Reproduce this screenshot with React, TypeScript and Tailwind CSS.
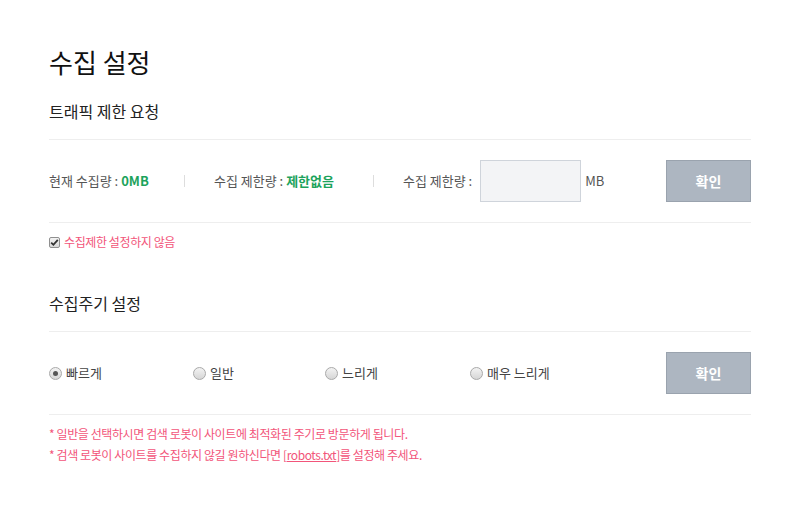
import React from 'react'

const font = { fontFamily: '"Noto Sans CJK KR", "Noto Sans", sans-serif' }

function Radio({ checked, label }: { checked?: boolean; label: string }) {
  return (
    <label className="flex items-center gap-[4px] text-[13px] text-[#444]">
      <span className="w-[13px] h-[13px] rounded-full border border-[#a9a9a9] bg-gradient-to-b from-[#f3f3f3] to-[#d6d6d6] flex items-center justify-center">
        {checked && <span className="w-[5px] h-[5px] rounded-full bg-[#555]" />}
      </span>
      {label}
    </label>
  )
}

function ConfirmButton() {
  return (
    <button className="w-[85px] h-[42px] bg-[#adb6c1] border border-[#9aa3ae] text-white text-[14px] font-bold">
      확인
    </button>
  )
}

export default function App() {
  return (
    <div className="min-h-screen bg-white" style={font}>
      <div className="w-[702px] ml-[49px] pt-[46px]">
        {/* Title */}
        <h1 className="text-[26px] leading-[32px] text-[#111]">수집 설정</h1>

        {/* Traffic limit */}
        <h2 className="mt-[23px] text-[16px] leading-[20px] text-[#222] pb-[18px] border-b border-[#eeeeee]">
          트래픽 제한 요청
        </h2>
        <div className="flex items-center py-[20px] border-b border-[#eeeeee] text-[13px] text-[#555]">
          <span className="w-[135px]">
            현재 수집량 : <b className="text-[#1ca35c]">0MB</b>
          </span>
          <span className="w-px h-[12px] bg-[#dddddd]" />
          <span className="ml-[29px] w-[159px]">
            수집 제한량 : <b className="text-[#1ca35c]">제한없음</b>
          </span>
          <span className="w-px h-[12px] bg-[#dddddd]" />
          <span className="ml-[29px]">수집 제한량 :</span>
          <input className="ml-[8px] w-[101px] h-[42px] bg-[#f3f4f6] border border-[#cfd4db] outline-none" />
          <span className="ml-[4px]">MB</span>
          <span className="ml-auto">
            <ConfirmButton />
          </span>
        </div>
        <label className="flex items-center gap-[4px] mt-[9px] h-[20px] text-[12px] tracking-[-0.4px] text-[#f2557a]">
          <span className="w-[11px] h-[11px] border border-[#8f8f8f] bg-gradient-to-b from-[#f4f4f4] to-[#d8d8d8] rounded-[2px] flex items-center justify-center">
            <svg width="9" height="9" viewBox="0 0 9 9">
              <path d="M1.2 4.6 L3.4 6.8 L7.8 1.8" fill="none" stroke="#333" strokeWidth="1.8" />
            </svg>
          </span>
          수집제한 설정하지 않음
        </label>

        {/* Crawl period */}
        <h2 className="mt-[41px] text-[16px] leading-[20px] text-[#222] pb-[18px] border-b border-[#eeeeee]">
          수집주기 설정
        </h2>
        <div className="flex items-center py-[20px] border-b border-[#eeeeee]">
          <span className="w-[144px]">
            <Radio checked label="빠르게" />
          </span>
          <span className="w-[132px]">
            <Radio label="일반" />
          </span>
          <span className="w-[145px]">
            <Radio label="느리게" />
          </span>
          <Radio label="매우 느리게" />
          <span className="ml-auto">
            <ConfirmButton />
          </span>
        </div>
        <ul className="pt-[8px] text-[12px] leading-[21px] tracking-[-0.4px] text-[#f2557a]">
          <li>* 일반을 선택하시면 검색 로봇이 사이트에 최적화된 주기로 방문하게 됩니다.</li>
          <li>
            * 검색 로봇이 사이트를 수집하지 않길 원하신다면 [<a className="underline">robots.txt</a>]를 설정해 주세요.
          </li>
        </ul>
      </div>
    </div>
  )
}
